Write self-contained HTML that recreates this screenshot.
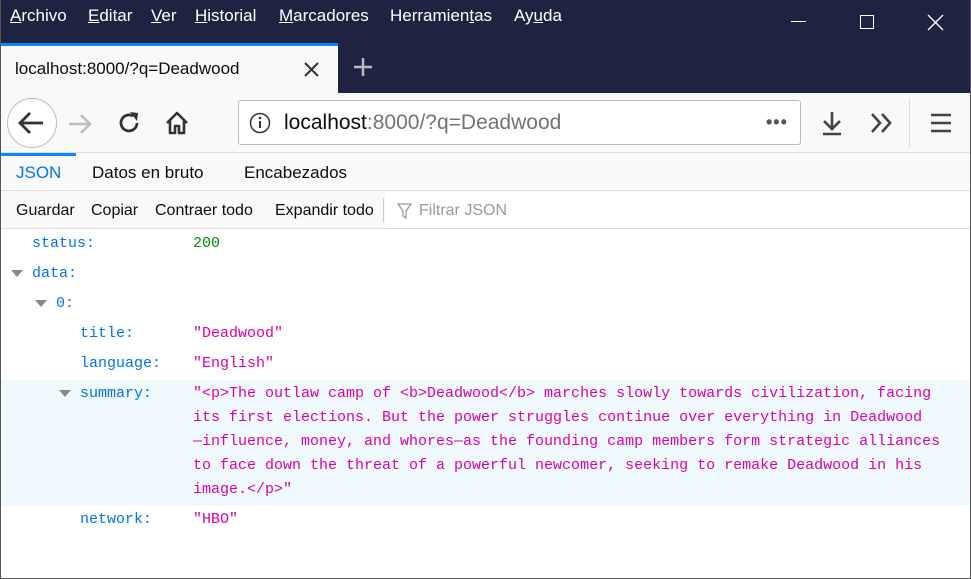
<!DOCTYPE html>
<html><head><meta charset="utf-8"><style>
*{margin:0;padding:0;box-sizing:border-box}
body{width:971px;height:579px;overflow:hidden;background:#fff;font-family:"Liberation Sans",sans-serif;position:relative}
.abs{position:absolute}
#top{left:0;top:0;width:971px;height:93px;background:#1f2342}
.menu{top:6px;color:#fff;font-size:17px}
.menu u{text-decoration:underline}
#tab{left:1px;top:43px;width:337px;height:50px;background:#f9f9fa;border-top:3px solid #0a84ff}
#nav{left:1px;top:93px;width:969px;height:60px;background:#f9f9fa;border-bottom:1px solid #ddd}
#url{left:238px;top:100px;width:563px;height:45px;background:#fff;border:1px solid #bbb;border-radius:3px}
#tabs2{left:1px;top:153px;width:969px;height:38px;background:#f9f9fa;border-bottom:1px solid #ddd}
#tb{left:1px;top:191px;width:969px;height:38px;background:#f9f9fa;border-bottom:1px solid #ddd}
.t{font-size:17px;color:#0c0c0d}
.mono{font-family:"Liberation Mono",monospace;font-size:15px;line-height:24px}
.k{color:#0074e8}.s{color:#dd00a9}.n{color:#058b00}
.tri{width:0;height:0;border-left:6px solid transparent;border-right:6px solid transparent;border-top:7px solid #888}
</style></head><body>
<div id="top" class="abs"></div>
<div class="abs menu" style="left:10px"><u>A</u>rchivo</div>
<div class="abs menu" style="left:88px"><u>E</u>ditar</div>
<div class="abs menu" style="left:151px"><u>V</u>er</div>
<div class="abs menu" style="left:195px"><u>H</u>istorial</div>
<div class="abs menu" style="left:279px"><u>M</u>arcadores</div>
<div class="abs menu" style="left:390px">Herramien<u>t</u>as</div>
<div class="abs menu" style="left:514px">Ay<u>u</u>da</div>
<div class="abs" style="left:791px;top:21px;width:15px;height:1px;background:#fff"></div>
<div class="abs" style="left:860px;top:15px;width:14px;height:14px;border:1px solid #fff"></div>
<svg class="abs" style="left:927px;top:14px" width="17" height="17"><path d="M1 1L16 16M16 1L1 16" stroke="#fff" stroke-width="1.3"/></svg>
<div id="tab" class="abs"></div>
<div class="abs t" style="left:15px;top:59px">localhost:8000/?q=Deadwood</div>
<svg class="abs" style="left:304px;top:62px" width="15" height="15"><path d="M1 1L14 14M14 1L1 14" stroke="#333" stroke-width="2"/></svg>
<svg class="abs" style="left:352px;top:56px" width="22" height="22"><path d="M11 2V20M2 11H20" stroke="#bbb" stroke-width="2.5"/></svg>
<div id="nav" class="abs"></div>
<div class="abs" style="left:7px;top:98px;width:50px;height:50px;border:1px solid #bbb;border-radius:50%;background:#fff"></div>
<svg class="abs" style="left:17px;top:110px" width="28" height="26"><path d="M26 13H4M13 3L3 13L13 23" stroke="#333" stroke-width="2.8" fill="none"/></svg>
<svg class="abs" style="left:68px;top:112px" width="26" height="24"><path d="M1 12H22M13 3L22 12L13 21" stroke="#bbb" stroke-width="2.5" fill="none"/></svg>
<svg class="abs" style="left:117px;top:111px" width="25" height="25"><path d="M20 12A8 8 0 1 1 16 5" stroke="#333" stroke-width="2.8" fill="none"/><path d="M13 1L21 2L20 10Z" fill="#333"/></svg>
<svg class="abs" style="left:164px;top:110px" width="26" height="26"><path d="M3 13L13 3L23 13M6 10V23H11V16H15V23H20V10" stroke="#333" stroke-width="2.6" fill="none" stroke-linejoin="round"/></svg>
<div id="url" class="abs"></div>
<svg class="abs" style="left:249px;top:112px" width="22" height="22"><circle cx="11" cy="11" r="9.5" stroke="#333" stroke-width="1.5" fill="none"/><path d="M11 9V16" stroke="#333" stroke-width="2"/><circle cx="11" cy="6" r="1.3" fill="#333"/></svg>
<div class="abs" style="left:284px;top:111px;font-size:21px;color:#0c0c0d">localhost<span style="color:#737373">:8000/?q=Deadwood</span></div>
<div class="abs" style="left:766px;top:112px;font-size:18px;color:#555;letter-spacing:1px;font-weight:bold">•••</div>
<svg class="abs" style="left:820px;top:110px" width="24" height="26"><path d="M12 2V19M4 11L12 19L20 11M3 24H21" stroke="#444" stroke-width="2.6" fill="none"/></svg>
<svg class="abs" style="left:870px;top:112px" width="24" height="22"><path d="M2 2L10 11L2 20M12 2L20 11L12 20" stroke="#444" stroke-width="2.6" fill="none"/></svg>
<div class="abs" style="left:909px;top:98px;width:1px;height:50px;background:#ddd"></div>
<svg class="abs" style="left:931px;top:113px" width="20" height="20"><path d="M0 2H20M0 10H20M0 18H20" stroke="#444" stroke-width="2.6"/></svg>
<div id="tabs2" class="abs"></div>
<div class="abs" style="left:1px;top:153px;width:75px;height:3px;background:#0a84ff"></div>
<div class="abs t" style="left:16px;top:163px;color:#0074e8">JSON</div>
<div class="abs t" style="left:92px;top:163px">Datos en bruto</div>
<div class="abs t" style="left:244px;top:163px">Encabezados</div>
<div id="tb" class="abs"></div>
<div class="abs" style="left:385px;top:192px;width:585px;height:36px;background:#fff"></div>
<div class="abs" style="left:16px;top:202px;font-size:16px;color:#0c0c0d">Guardar</div>
<div class="abs" style="left:91px;top:202px;font-size:16px;color:#0c0c0d">Copiar</div>
<div class="abs" style="left:155px;top:202px;font-size:16px;color:#0c0c0d">Contraer todo</div>
<div class="abs" style="left:275px;top:202px;font-size:16px;color:#0c0c0d">Expandir todo</div>
<div class="abs" style="left:383px;top:198px;width:1px;height:24px;background:#ccc"></div>
<svg class="abs" style="left:397px;top:203px" width="15" height="16"><path d="M1 1H14L9 8V15L6 13V8Z" stroke="#999" stroke-width="1.3" fill="none"/></svg>
<div class="abs" style="left:419px;top:202px;font-size:16px;color:#999">Filtrar JSON</div>
<div class="abs" style="left:1px;top:380px;width:969px;height:125px;background:#f0f9fe"></div>
<div class="abs mono k" style="left:32px;top:232px">status:</div><div class="abs mono n" style="left:193px;top:232px">200</div>
<div class="abs tri" style="left:11px;top:270px"></div><div class="abs mono k" style="left:32px;top:262px">data:</div>
<div class="abs tri" style="left:35px;top:300px"></div><div class="abs mono k" style="left:56px;top:292px">0:</div>
<div class="abs mono k" style="left:80px;top:322px">title:</div><div class="abs mono s" style="left:193px;top:322px">"Deadwood"</div>
<div class="abs mono k" style="left:80px;top:352px">language:</div><div class="abs mono s" style="left:193px;top:352px">"English"</div>
<div class="abs tri" style="left:59px;top:390px"></div><div class="abs mono k" style="left:80px;top:382px">summary:</div>
<div class="abs mono s" style="left:193px;top:382px;white-space:pre">"&lt;p&gt;The outlaw camp of &lt;b&gt;Deadwood&lt;/b&gt; marches slowly towards civilization, facing
its first elections. But the power struggles continue over everything in Deadwood
—influence, money, and whores—as the founding camp members form strategic alliances
to face down the threat of a powerful newcomer, seeking to remake Deadwood in his
image.&lt;/p&gt;"</div>
<div class="abs mono k" style="left:80px;top:508px">network:</div><div class="abs mono s" style="left:193px;top:508px">"HBO"</div>
<div class="abs" style="left:0;top:0;width:1px;height:579px;background:#555"></div>
<div class="abs" style="left:970px;top:0;width:1px;height:579px;background:#555"></div>
<div class="abs" style="left:0;top:578px;width:971px;height:1px;background:#555"></div>
</body></html>
